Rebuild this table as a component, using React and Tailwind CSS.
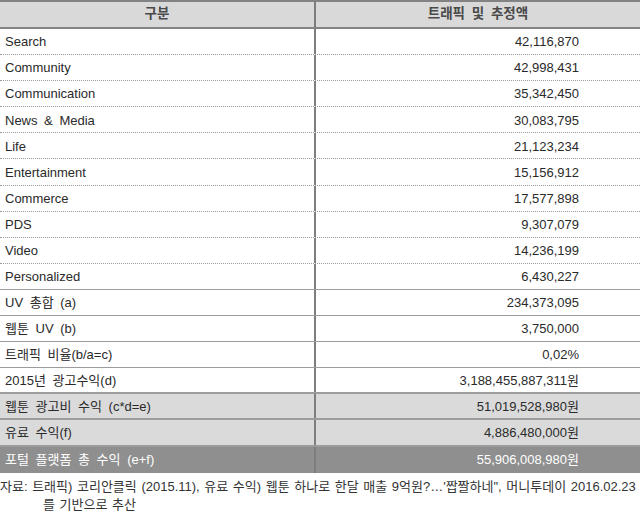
import React from 'react';

const rows = [
  ['Search', '42,116,870', 'dot'],
  ['Community', '42,998,431', 'dot'],
  ['Communication', '35,342,450', 'dot'],
  ['News & Media', '30,083,795', 'dot'],
  ['Life', '21,123,234', 'dot'],
  ['Entertainment', '15,156,912', 'dot'],
  ['Commerce', '17,577,898', 'dot'],
  ['PDS', '9,307,079', 'dot'],
  ['Video', '14,236,199', 'dot'],
  ['Personalized', '6,430,227', 'solid'],
  ['UV 총합 (a)', '234,373,095', 'solid'],
  ['웹툰 UV (b)', '3,750,000', 'solid'],
  ['트래픽 비율(b/a=c)', '0,02%', 'solid'],
  ['2015년 광고수익(d)', '3,188,455,887,311원', 'thick'],
  ['웹툰 광고비 수익 (c*d=e)', '51,019,528,980원', 'gray'],
  ['유료 수익(f)', '4,886,480,000원', 'gray'],
  ['포털 플랫폼 총 수익 (e+f)', '55,906,008,980원', 'dark'],
];

const font = { fontFamily: '"Liberation Sans", "Noto Sans CJK KR", sans-serif' };

function Row({ label, value, kind }) {
  const bg =
    kind === 'gray' ? 'bg-[#dadada] text-[#2a2a2a]' : kind === 'dark' ? 'bg-[#8f8f8f] text-white' : 'bg-white text-[#2a2a2a]';
  const border =
    kind === 'dot'
      ? 'border-b border-dotted border-[#9a9a9a]'
      : kind === 'dark'
      ? ''
      : kind === 'gray' || kind === 'thick'
      ? 'border-b-2 border-[#9c9c9c]'
      : 'border-b border-[#9c9c9c]';
  return (
    <div className={`flex h-[26.1px] box-border text-[13px] [word-spacing:3px] ${bg} ${border}`}>
      <div className="w-[316px] flex items-center pl-[5px] pt-[1px] border-r-2 border-[#7d7d7d]">{label}</div>
      <div className="flex-1 flex items-center justify-end pr-[61px] pt-[1px]">{value}</div>
    </div>
  );
}

export default function App() {
  return (
    <div className="w-[640px] h-[513px] overflow-hidden bg-white" style={font}>
      <div className="flex h-[29px] box-border bg-[#d9d9d9] border-t-2 border-b-2 border-[#838383] text-[13.5px] font-bold text-[#4a4a4a] [word-spacing:3px]">
        <div className="w-[316px] flex items-center justify-center border-r-2 border-[#7d7d7d]">구분</div>
        <div className="flex-1 flex items-center justify-center">트래픽 및 추정액</div>
      </div>
      {rows.map(([l, v, k]) => (
        <Row key={l} label={l} value={v} kind={k} />
      ))}
      <div className="pt-[5px] text-[13px] leading-[18px] text-[#333] whitespace-nowrap [word-spacing:1px]">
        <div>자료: 트래픽) 코리안클릭 (2015.11), 유료 수익) 웹툰 하나로 한달 매출 9억원?…'짭짤하네", 머니투데이 2016.02.23</div>
        <div className="pl-[43px]">를 기반으로 추산</div>
      </div>
    </div>
  );
}
